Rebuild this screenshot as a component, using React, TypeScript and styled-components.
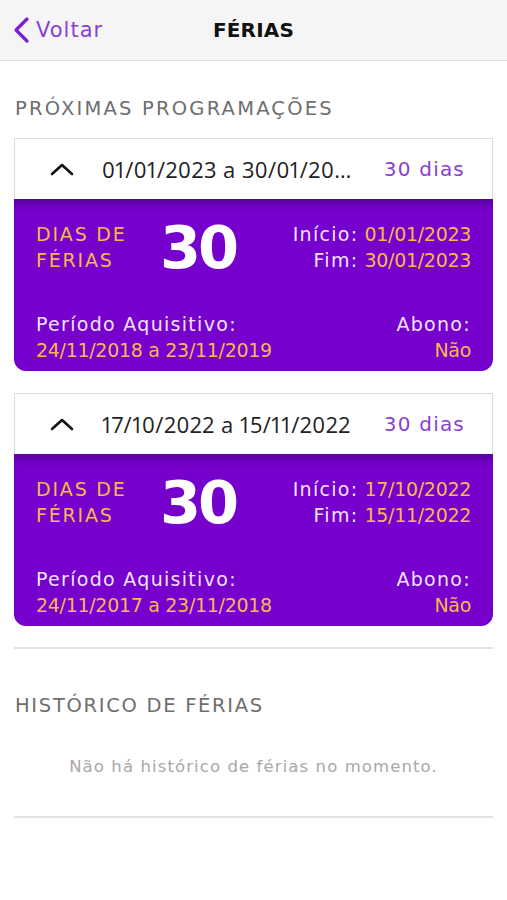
import React from 'react';
import styled, { createGlobalStyle } from 'styled-components';

interface Programacao {
  periodo: string;
  dias: number;
  inicio: string;
  fim: string;
  aquisitivo: string;
  abono: string;
}

const programacoes: Programacao[] = [
  {
    periodo: '01/01/2023 a 30/01/2023',
    dias: 30,
    inicio: '01/01/2023',
    fim: '30/01/2023',
    aquisitivo: '24/11/2018 a 23/11/2019',
    abono: 'Não',
  },
  {
    periodo: '17/10/2022 a 15/11/2022',
    dias: 30,
    inicio: '17/10/2022',
    fim: '15/11/2022',
    aquisitivo: '24/11/2017 a 23/11/2018',
    abono: 'Não',
  },
];

const FONT = `"DejaVu Sans", "Open Sans", sans-serif`;

const GlobalStyle = createGlobalStyle`
  html, body {
    margin: 0;
    padding: 0;
    background: #ffffff;
    font-family: ${FONT};
  }
  * {
    box-sizing: border-box;
  }
`;

const ChevronUp: React.FC = () => (
  <svg width="24" height="14" viewBox="0 0 24 14" fill="none">
    <path d="M2 12L12 3L22 12" stroke="#111" strokeWidth="2.6" strokeLinecap="round" strokeLinejoin="round" />
  </svg>
);

const ChevronLeft: React.FC = () => (
  <svg width="18" height="28" viewBox="0 0 18 28" fill="none">
    <path d="M15 3L4 14L15 25" stroke="#7a1fd1" strokeWidth="3.2" strokeLinecap="round" strokeLinejoin="round" />
  </svg>
);

const ProgramacaoCard: React.FC<{ item: Programacao }> = ({ item }) => (
  <Card>
    <CardHeader>
      <ToggleIcon>
        <ChevronUp />
      </ToggleIcon>
      <PeriodText>{item.periodo}</PeriodText>
      <DaysTag>{item.dias} dias</DaysTag>
    </CardHeader>
    <CardBody>
      <TopRow>
        <DaysLabel>
          DIAS DE
          <br />
          FÉRIAS
        </DaysLabel>
        <BigNumber>{item.dias}</BigNumber>
        <DatesBlock>
          <DateLine>
            <Label>Início:</Label> <Value>{item.inicio}</Value>
          </DateLine>
          <DateLine>
            <Label>Fim:</Label> <Value>{item.fim}</Value>
          </DateLine>
        </DatesBlock>
      </TopRow>
      <BottomRow>
        <InfoCol>
          <Label>Período Aquisitivo:</Label>
          <Value>{item.aquisitivo}</Value>
        </InfoCol>
        <InfoCol $right>
          <Label>Abono:</Label>
          <Value>{item.abono}</Value>
        </InfoCol>
      </BottomRow>
    </CardBody>
  </Card>
);

const App: React.FC = () => (
  <>
    <GlobalStyle />
    <Page>
      <NavBar>
        <BackButton>
          <ChevronLeft />
          <span>Voltar</span>
        </BackButton>
        <NavTitle>FÉRIAS</NavTitle>
      </NavBar>
      <Content>
        <SectionTitle>PRÓXIMAS PROGRAMAÇÕES</SectionTitle>
        <CardList>
          {programacoes.map((p) => (
            <ProgramacaoCard key={p.periodo} item={p} />
          ))}
        </CardList>
        <Divider />
        <SectionTitle $spaced>HISTÓRICO DE FÉRIAS</SectionTitle>
        <EmptyText>Não há histórico de férias no momento.</EmptyText>
        <Divider />
      </Content>
    </Page>
  </>
);

const Page = styled.div`
  width: 507px;
  min-height: 900px;
  background: #ffffff;
`;

const NavBar = styled.header`
  position: relative;
  height: 61px;
  background: #f5f5f5;
  border-bottom: 1px solid #dedede;
  display: flex;
  align-items: center;
  justify-content: center;
`;

const BackButton = styled.div`
  position: absolute;
  left: 12px;
  top: 0;
  bottom: 0;
  display: flex;
  align-items: center;
  gap: 6px;
  color: #8a3fd0;
  font-size: 21px;
  letter-spacing: 1px;
`;

const NavTitle = styled.h1`
  margin: 0;
  font-size: 20px;
  font-weight: 700;
  color: #111111;
  letter-spacing: 0.2px;
`;

const Content = styled.main`
  padding: 0 14px;
`;

const SectionTitle = styled.h2<{ $spaced?: boolean }>`
  margin: ${(p) => (p.$spaced ? '44px 0 0' : '35px 0 0')};
  padding-left: 1px;
  font-size: 19.5px;
  font-weight: 400;
  color: #6e6e6e;
  line-height: 26px;
  letter-spacing: ${(p) => (p.$spaced ? '1.7px' : '2.2px')};
`;

const CardList = styled.div`
  margin-top: 16px;
  display: flex;
  flex-direction: column;
  gap: 22px;
`;

const Card = styled.section`
  display: flex;
  flex-direction: column;
`;

const CardHeader = styled.div`
  height: 61px;
  background: #ffffff;
  border: 1px solid #dcdcdc;
  border-bottom: none;
  display: flex;
  align-items: center;
  padding: 0 27px 0 35px;
`;

const ToggleIcon = styled.div`
  width: 24px;
  display: flex;
  align-items: center;
  margin-right: 28px;
`;

const PeriodText = styled.span`
  flex: 1;
  min-width: 0;
  white-space: nowrap;
  overflow: hidden;
  text-overflow: ellipsis;
  font-family: "Open Sans", "DejaVu Sans", sans-serif;
  font-variant-numeric: proportional-nums;
  font-size: 22px;
  letter-spacing: 0.45px;
  color: #222222;
  margin-right: 30px;
`;

const DaysTag = styled.span`
  font-size: 20px;
  letter-spacing: 1.2px;
  color: #8a3fd0;
  white-space: nowrap;
`;

const CardBody = styled.div`
  height: 172px;
  background: #7600cc;
  border-radius: 0 0 12px 12px;
  box-shadow: inset 0 10px 10px -6px rgba(40, 0, 80, 0.45);
  padding: 22px 22px 0 22px;
  display: flex;
  flex-direction: column;
`;

const TopRow = styled.div`
  display: flex;
  align-items: flex-start;
`;

const DaysLabel = styled.div`
  width: 124px;
  font-size: 19px;
  line-height: 26px;
  letter-spacing: 1.8px;
  color: #f8b84e;
`;

const BigNumber = styled.div`
  font-size: 59px;
  font-weight: 700;
  line-height: 56px;
  letter-spacing: -3px;
  color: #ffffff;
  margin-top: -1px;
`;

const DatesBlock = styled.div`
  flex: 1;
  display: flex;
  flex-direction: column;
  align-items: flex-end;
`;

const DateLine = styled.div`
  font-size: 19px;
  line-height: 26px;
`;

const Label = styled.span`
  color: #f2e2ff;
  letter-spacing: 1.3px;
`;

const Value = styled.span`
  color: #f8b84e;
  letter-spacing: -0.3px;
`;

const BottomRow = styled.div`
  margin-top: 35px;
  display: flex;
  justify-content: space-between;
`;

const InfoCol = styled.div<{ $right?: boolean }>`
  display: flex;
  flex-direction: column;
  align-items: ${(p) => (p.$right ? 'flex-end' : 'flex-start')};
  font-size: 19px;
  line-height: 26px;
`;

const Divider = styled.hr`
  margin: 21px 0 0;
  border: none;
  border-top: 2px solid #e2e2e2;
`;

const EmptyText = styled.p`
  margin: 38px 0 40px;
  text-align: center;
  font-size: 16.5px;
  letter-spacing: 1.1px;
  color: #a8a8a8;
`;

export default App;
